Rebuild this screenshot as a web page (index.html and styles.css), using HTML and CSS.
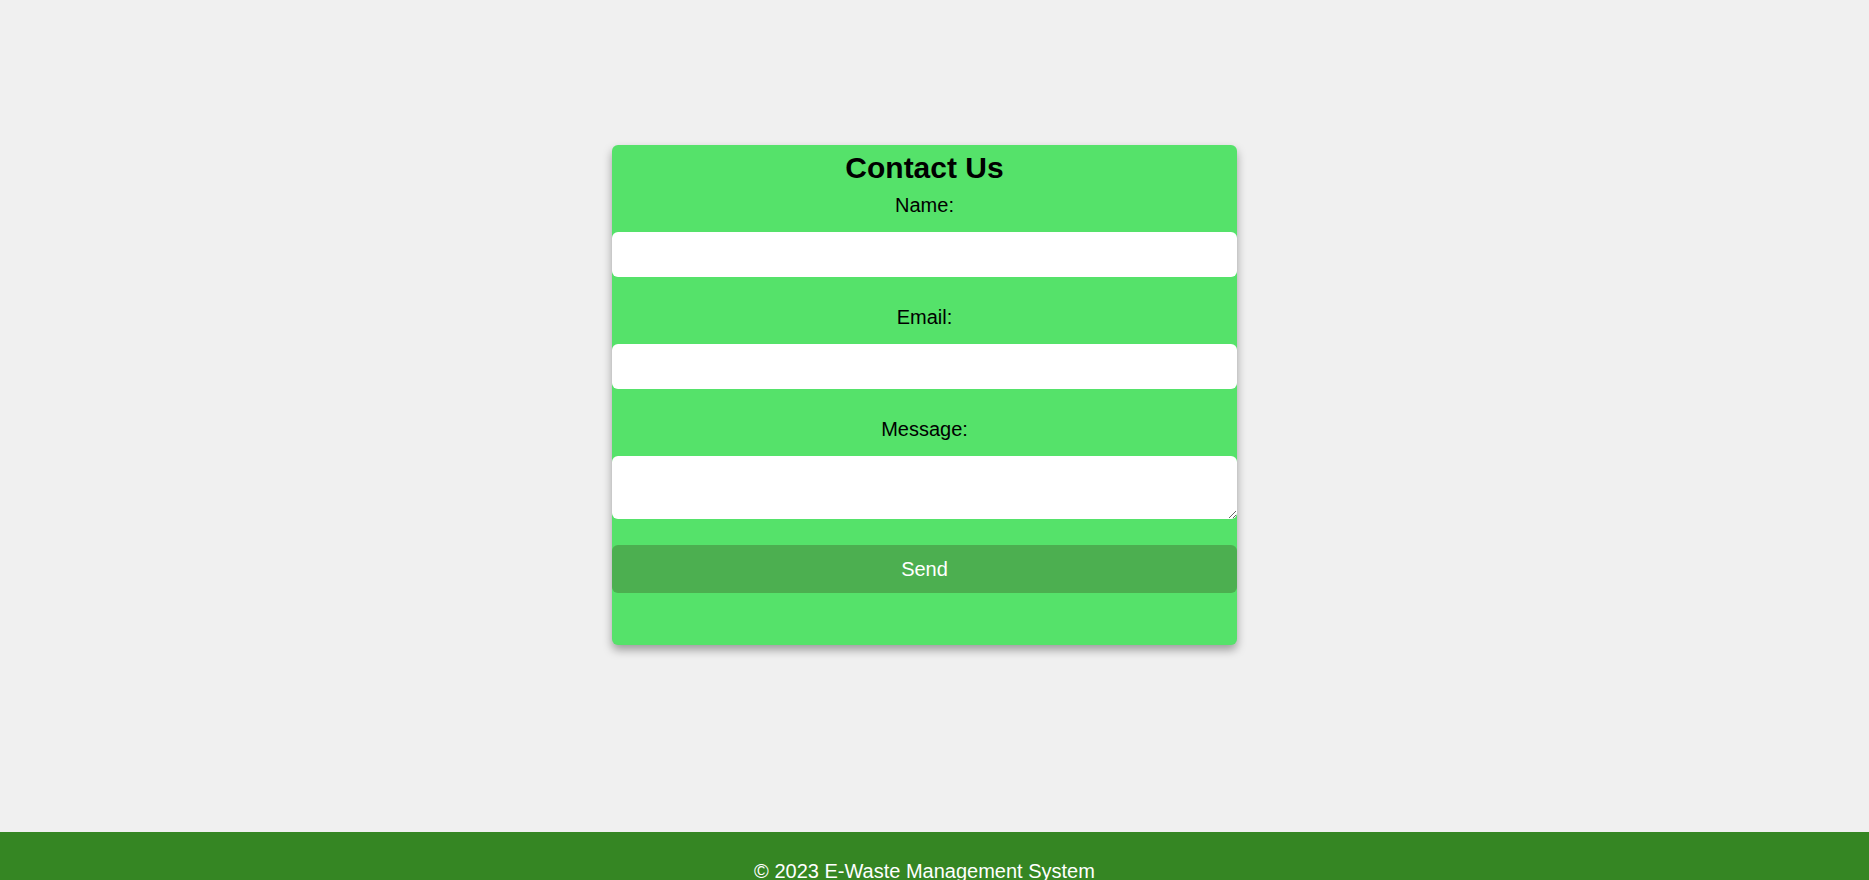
FILE: index.html
```html
<!DOCTYPE html>
<html lang="en">
<head>
<meta charset="utf-8">
<title>Contact Us - E-Waste Management System</title>
<link rel="stylesheet" href="styles.css">
</head>
<body>
<main class="page">
  <section class="card">
    <h2 class="card-title">Contact Us</h2>
    <form class="contact-form">
      <label class="field-label" for="name">Name:</label>
      <input class="field-input" id="name" type="text">
      <label class="field-label" for="email">Email:</label>
      <input class="field-input" id="email" type="email">
      <label class="field-label" for="message">Message:</label>
      <textarea class="field-input field-textarea" id="message"></textarea>
      <button class="send-btn" type="button">Send</button>
    </form>
  </section>
</main>
<footer class="site-footer">
  <p class="footer-text">© 2023 E-Waste Management System</p>
</footer>
</body>
</html>
```

FILE: styles.css
```css
* { box-sizing: border-box; }

html, body {
  margin: 0;
  padding: 0;
}

body {
  background: #f0f0f0;
  font-family: "Liberation Sans", Arial, sans-serif;
  color: #000;
}

.page {
  height: 832px;
  padding: 145px 20px 0 0;
}

.card {
  width: 625px;
  margin: 0 auto;
  background: #55e26a;
  border-radius: 6px;
  box-shadow: 0 5px 10px rgba(0, 0, 0, 0.35);
  padding: 5px 0 52px;
  text-align: center;
}

.card-title {
  margin: 0;
  font-size: 30px;
  line-height: 35px;
  font-weight: bold;
}

.contact-form {
  display: flex;
  flex-direction: column;
}

.field-label {
  display: block;
  font-size: 20px;
  line-height: 23px;
  margin-top: 29px;
}

.field-label:first-child {
  margin-top: 9px;
}

.field-input {
  display: block;
  width: 100%;
  height: 45px;
  margin-top: 15px;
  border: none;
  border-radius: 6px;
  background: #fff;
  font-family: inherit;
  font-size: 20px;
  padding: 10px;
}

.field-textarea {
  height: 63px;
  resize: both;
}

.send-btn {
  display: block;
  width: 100%;
  height: 48px;
  margin-top: 26px;
  border: none;
  border-radius: 6px;
  background: #4caf50;
  color: #fff;
  font-family: inherit;
  font-size: 20px;
  line-height: 23px;
  cursor: pointer;
}

.site-footer {
  background: #358623;
  padding: 28px 20px 25px 0;
  text-align: center;
  color: #fff;
}

.footer-text {
  margin: 0;
  font-size: 20px;
  line-height: 23px;
}
```
